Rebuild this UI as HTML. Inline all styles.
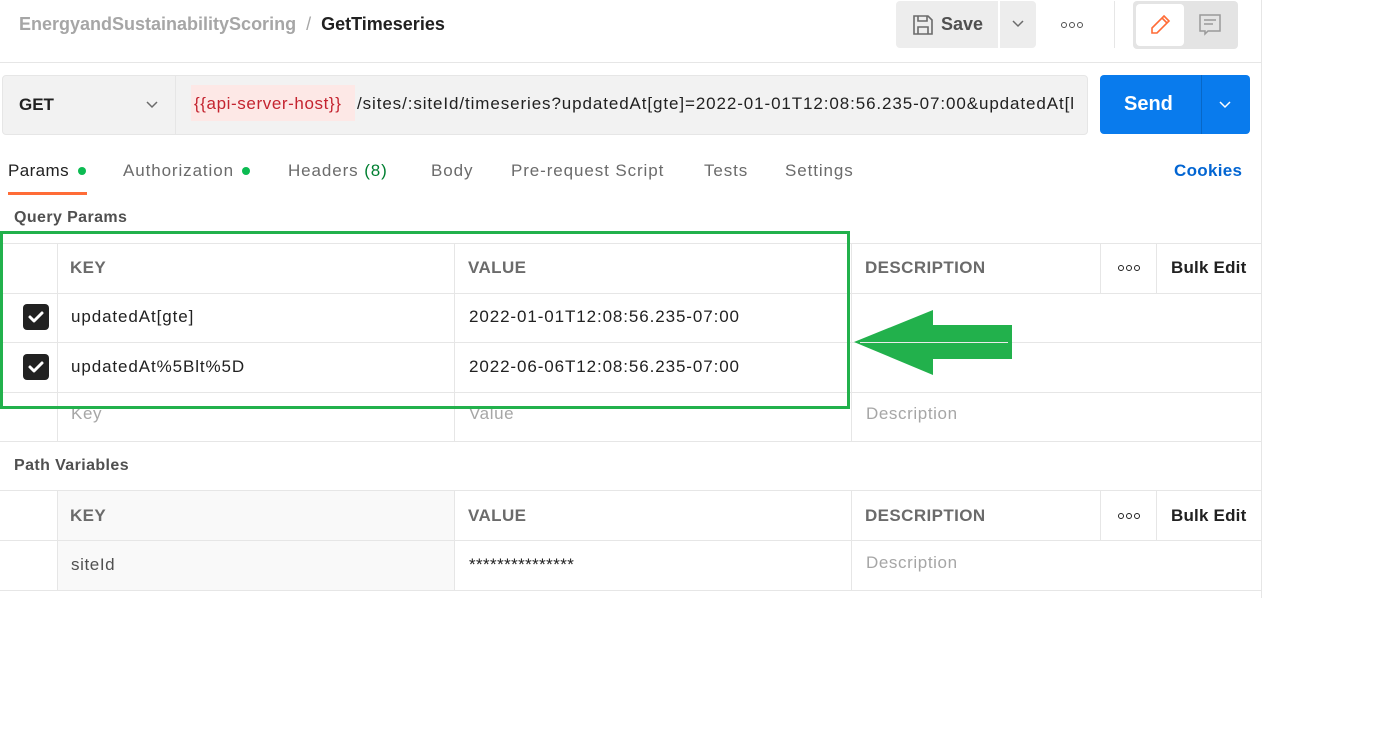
<!DOCTYPE html>
<html><head><meta charset="utf-8"><style>
*{margin:0;padding:0;box-sizing:border-box}
body{width:1394px;height:756px;background:#fff;font-family:"Liberation Sans",sans-serif;position:relative;overflow:hidden;color:#212121}
.a{position:absolute;white-space:nowrap}
.hl{position:absolute;height:1px;background:#e6e6e6}
.vl{position:absolute;width:1px;background:#e6e6e6}
.th{font-size:17px;font-weight:bold;color:#6b6b6b;letter-spacing:0.4px}
.td{font-size:17px;color:#212121;letter-spacing:0.9px}
.ph{font-size:17px;color:#a6a6a6;letter-spacing:0.6px}
.tab{font-size:17px;color:#6b6b6b;letter-spacing:0.9px}
.cb{position:absolute;width:26px;height:26px;border-radius:4px;background:#212121}
.dots{position:absolute;display:flex;gap:2px}
.dots i{display:block;width:6px;height:6px;border:1.5px solid #212121;border-radius:50%}
</style></head><body>
<div class="vl" style="left:1261px;top:0;height:598px"></div>
<!-- header -->
<div class="a" style="left:19px;top:14px;font-size:18px;font-weight:bold;color:#a6a6a6">EnergyandSustainabilityScoring <span style="color:#a6a6a6;font-weight:normal">&nbsp;/&nbsp;</span> <span style="color:#212121">GetTimeseries</span></div>
<div class="a" style="left:896px;top:1px;width:102px;height:47px;background:#ededed;border-radius:4px 0 0 4px"></div>
<svg class="a" style="left:911px;top:13px" width="24" height="24" viewBox="0 0 24 24" fill="none" stroke="#6b6b6b" stroke-width="1.6"><path d="M3 3h14l4 4v14H3z"/><path d="M7 3v5h9V3"/><path d="M7 21v-7h10v7"/></svg>
<div class="a" style="left:941px;top:14px;font-size:18px;font-weight:bold;color:#505050">Save</div>
<div class="a" style="left:1000px;top:1px;width:36px;height:47px;background:#ededed;border-radius:0 4px 4px 0"></div>
<svg class="a" style="left:1011px;top:19px" width="14" height="10" viewBox="0 0 14 10" fill="none" stroke="#6b6b6b" stroke-width="1.5"><path d="M2 2l5 5 5-5"/></svg>
<div class="dots" style="left:1061px;top:22px"><i style="border-color:#505050"></i><i style="border-color:#505050"></i><i style="border-color:#505050"></i></div>
<div class="vl" style="left:1114px;top:1px;height:47px"></div>
<div class="a" style="left:1133px;top:1px;width:105px;height:48px;background:#e4e4e4;border-radius:4px"></div>
<div class="a" style="left:1136px;top:4px;width:48px;height:42px;background:#fff;border-radius:4px"></div>
<svg class="a" style="left:1148px;top:13px" width="24" height="24" viewBox="0 0 24 24" fill="none" stroke="#ff6c37" stroke-width="1.6"><path d="M16 3l5 5L9 20H4v-5z"/><path d="M14 5l5 5"/></svg>
<svg class="a" style="left:1198px;top:13px" width="24" height="24" viewBox="0 0 24 24" fill="none" stroke="#9a9a9a" stroke-width="1.5"><path d="M2 2h20v16H10l-3 3v-3H2z"/><path d="M6 7h12M6 11h9"/></svg>
<div class="hl" style="left:0;top:62px;width:1261px"></div>
<!-- url bar -->
<div class="a" style="left:2px;top:75px;width:1086px;height:60px;background:#f2f2f2;border:1px solid #e6e6e6;border-radius:4px"></div>
<div class="vl" style="left:175px;top:76px;height:58px"></div>
<div class="a" style="left:19px;top:95px;font-size:17px;font-weight:bold;color:#212121">GET</div>
<svg class="a" style="left:145px;top:100px" width="14" height="10" viewBox="0 0 14 10" fill="none" stroke="#6b6b6b" stroke-width="1.5"><path d="M2 2l5 5 5-5"/></svg>
<div class="a" style="left:191px;top:85px;width:164px;height:36px;background:#fde8e6"></div>
<div class="a" style="left:194px;top:94px;font-size:17px;color:#c4232f;letter-spacing:0.6px">{{api-server-host}}</div>
<div class="a" style="left:357px;top:94px;font-size:17px;color:#212121;width:716px;overflow:hidden;letter-spacing:0.9px">/sites/:siteId/timeseries?updatedAt[gte]=2022-01-01T12:08:56.235-07:00&amp;updatedAt[lt]=</div>
<div class="a" style="left:1100px;top:75px;width:150px;height:59px;background:#097bed;border-radius:4px"></div>
<div class="vl" style="left:1201px;top:75px;height:59px;background:#0767c7"></div>
<div class="a" style="left:1124px;top:93px;font-size:20px;font-weight:bold;color:#fff">Send</div>
<svg class="a" style="left:1218px;top:100px" width="14" height="10" viewBox="0 0 14 10" fill="none" stroke="#fff" stroke-width="1.5"><path d="M2 2l5 5 5-5"/></svg>
<!-- tabs -->
<div class="a tab" style="left:8px;top:161px;color:#212121;letter-spacing:0.4px">Params</div>
<div class="a" style="left:78px;top:167px;width:8px;height:8px;border-radius:50%;background:#0cbb52"></div>
<div class="a" style="left:8px;top:192px;width:79px;height:3px;background:#ff6c37"></div>
<div class="a tab" style="left:123px;top:161px">Authorization</div>
<div class="a" style="left:242px;top:167px;width:8px;height:8px;border-radius:50%;background:#0cbb52"></div>
<div class="a tab" style="left:288px;top:161px">Headers <span style="color:#007f31">(8)</span></div>
<div class="a tab" style="left:431px;top:161px">Body</div>
<div class="a tab" style="left:511px;top:161px">Pre-request Script</div>
<div class="a tab" style="left:704px;top:161px">Tests</div>
<div class="a tab" style="left:785px;top:161px">Settings</div>
<div class="a" style="left:1174px;top:161px;font-size:17px;font-weight:bold;color:#0265d2;letter-spacing:0.3px">Cookies</div>
<div class="a" style="left:14px;top:209px;font-size:16px;font-weight:bold;color:#505050;letter-spacing:0.4px">Query Params</div>
<!-- query table -->
<div class="hl" style="left:0;top:243px;width:1261px"></div>
<div class="hl" style="left:0;top:293px;width:1261px"></div>
<div class="hl" style="left:0;top:342px;width:1261px"></div>
<div class="hl" style="left:0;top:392px;width:1261px"></div>
<div class="hl" style="left:0;top:441px;width:1261px"></div>
<div class="vl" style="left:57px;top:243px;height:198px"></div>
<div class="vl" style="left:454px;top:243px;height:198px"></div>
<div class="vl" style="left:851px;top:243px;height:198px"></div>
<div class="vl" style="left:1100px;top:243px;height:50px"></div>
<div class="vl" style="left:1156px;top:243px;height:50px"></div>
<div class="a th" style="left:70px;top:258px">KEY</div>
<div class="a th" style="left:468px;top:258px">VALUE</div>
<div class="a th" style="left:865px;top:258px">DESCRIPTION</div>
<div class="dots" style="left:1118px;top:265px"><i></i><i></i><i></i></div>
<div class="a" style="left:1171px;top:258px;font-size:17px;font-weight:bold;color:#212121;letter-spacing:0.2px">Bulk Edit</div>
<div class="cb" style="left:23px;top:304px"></div>
<svg class="a" style="left:23px;top:304px" width="26" height="26" viewBox="0 0 26 26" fill="none" stroke="#fff" stroke-width="3" stroke-linecap="round" stroke-linejoin="round"><path d="M7 13l4 4 8-8"/></svg>
<div class="cb" style="left:23px;top:354px"></div>
<svg class="a" style="left:23px;top:354px" width="26" height="26" viewBox="0 0 26 26" fill="none" stroke="#fff" stroke-width="3" stroke-linecap="round" stroke-linejoin="round"><path d="M7 13l4 4 8-8"/></svg>
<div class="a td" style="left:71px;top:307px">updatedAt[gte]</div>
<div class="a td" style="left:469px;top:307px">2022-01-01T12:08:56.235-07:00</div>
<div class="a td" style="left:71px;top:357px">updatedAt%5Blt%5D</div>
<div class="a td" style="left:469px;top:357px">2022-06-06T12:08:56.235-07:00</div>
<div class="a ph" style="left:71px;top:404px">Key</div>
<div class="a ph" style="left:469px;top:404px">Value</div>
<div class="a ph" style="left:866px;top:404px">Description</div>
<!-- path vars -->
<div class="a" style="left:14px;top:457px;font-size:16px;font-weight:bold;color:#505050;letter-spacing:0.4px">Path Variables</div>
<div class="a" style="left:57px;top:491px;width:397px;height:99px;background:#f9f9f9"></div>
<div class="hl" style="left:0;top:490px;width:1261px"></div>
<div class="hl" style="left:0;top:540px;width:1261px"></div>
<div class="hl" style="left:0;top:590px;width:1261px"></div>
<div class="vl" style="left:57px;top:490px;height:100px"></div>
<div class="vl" style="left:454px;top:490px;height:100px"></div>
<div class="vl" style="left:851px;top:490px;height:100px"></div>
<div class="vl" style="left:1100px;top:490px;height:50px"></div>
<div class="vl" style="left:1156px;top:490px;height:50px"></div>
<div class="a th" style="left:70px;top:506px">KEY</div>
<div class="a th" style="left:468px;top:506px">VALUE</div>
<div class="a th" style="left:865px;top:506px">DESCRIPTION</div>
<div class="dots" style="left:1118px;top:513px"><i></i><i></i><i></i></div>
<div class="a" style="left:1171px;top:506px;font-size:17px;font-weight:bold;color:#212121;letter-spacing:0.2px">Bulk Edit</div>
<div class="a" style="left:71px;top:555px;font-size:17px;color:#505050;letter-spacing:0.6px">siteId</div>
<div class="a td" style="left:469px;top:555px;letter-spacing:0.4px">***************</div>
<div class="a ph" style="left:866px;top:553px">Description</div>
<!-- annotations -->
<div class="a" style="left:0;top:231px;width:850px;height:178px;border:3px solid #22b14c"></div>
<svg class="a" style="left:850px;top:305px" width="170" height="75" viewBox="850 305 170 75"><polygon points="854,342 933,310 933,325 1012,325 1012,359 933,359 933,375" fill="#22b14c"/><line x1="860" y1="342.5" x2="1008" y2="342.5" stroke="#eaeaea" stroke-width="1"/></svg>
</body></html>
